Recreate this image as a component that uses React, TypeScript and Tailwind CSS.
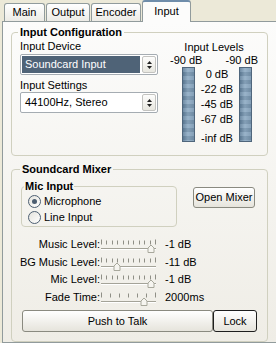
import React from 'react';

/** XP-style trackbar: ticks on top, thin groove, small pointed thumb */
function Trackbar({ ticks, thumb }: { ticks: number; thumb: number }) {
  const xs = Array.from({ length: ticks }, (_, i) => 1 + Math.round((i * 54) / (ticks - 1)));
  return (
    <svg width="57" height="17.5" viewBox="0 0 57 17.5" className="shrink-0">
      {xs.map((x, i) => (
        <line
          key={i}
          x1={x + 0.5}
          x2={x + 0.5}
          y1={i === 0 || i === ticks - 1 ? 3.5 : 4.5}
          y2={8.5}
          stroke="#8f8f86"
        />
      ))}
      <line x1="1" x2="56" y1="12.5" y2="12.5" stroke="#a4a398" />
      <line x1="1" x2="56" y1="13.5" y2="13.5" stroke="#ffffff" />
      <path
        d={`M${thumb - 3} 12 L${thumb} 9 L${thumb + 3} 12 V16.5 H${thumb - 3} Z`}
        fill="#f6f5f0"
        stroke="#a8a89c"
      />
    </svg>
  );
}

function Select({ value, selected = false }: { value: string; selected?: boolean }) {
  return (
    <div className="flex h-[21px] w-[138px] items-stretch rounded-[2px] border border-[#a5acb2] bg-white p-[1px]">
      <div
        className={`flex flex-1 items-center pl-[3px] ${
          selected ? 'bg-[#4f6377] text-white' : 'text-black'
        }`}
      >
        {value}
      </div>
      <div className="ml-[2px] flex w-[14px] flex-col items-center justify-center gap-[2px] rounded-[2px] border border-[#c3c3c0] bg-linear-to-b from-[#fdfdfc] to-[#e8e7e0]">
        <svg width="5" height="3" viewBox="0 0 5 3">
          <path d="M2.5 0 L5 3 H0 Z" fill="#222" />
        </svg>
        <svg width="5" height="3" viewBox="0 0 5 3">
          <path d="M0 0 H5 L2.5 3 Z" fill="#222" />
        </svg>
      </div>
    </div>
  );
}

function Meter() {
  return (
    <div className="h-[75px] w-[13px] border border-[#4f667c] bg-[image:repeating-linear-gradient(to_bottom,rgba(255,255,255,0.10)_0px,rgba(255,255,255,0.10)_4px,rgba(0,0,0,0.07)_4px,rgba(0,0,0,0.07)_8px),linear-gradient(to_right,#61809b,#8eabc4_45%,#7795af)]" />
  );
}

function Radio({ checked, label }: { checked?: boolean; label: string }) {
  return (
    <div className="flex h-[16px] items-center">
      <div className="ml-[4px] flex h-[13px] w-[13px] items-center justify-center rounded-full border border-[#4d5f72] bg-linear-to-br from-[#e4e3dd] to-white">
        {checked && <div className="h-[5px] w-[5px] rounded-full bg-[#4c5d70]" />}
      </div>
      <span className="ml-[3px]">{label}</span>
    </div>
  );
}

function LevelRow({ label, value, ticks, thumb }: { label: string; value: string; ticks: number; thumb: number }) {
  return (
    <div className="flex h-[17.5px] items-center">
      <div className="flex w-[79px] shrink-0 justify-end whitespace-nowrap">
        <span>{label}</span>
      </div>
      <Trackbar ticks={ticks} thumb={thumb} />
      <span className="ml-[8px]">{value}</span>
    </div>
  );
}

function Tab({ label, width }: { label: string; width: string }) {
  return (
    <div
      className={`flex h-[18px] items-start justify-center rounded-t-[3px] border border-b-0 border-[#919b9c] bg-linear-to-b from-white to-[#ecebe6] pt-[2px] ${width}`}
    >
      {label}
    </div>
  );
}

export default function App() {
  return (
    <div className="h-[343px] w-[276px] overflow-hidden bg-[#ece9d8] font-['Liberation_Sans',Arial,sans-serif] text-[11px] leading-[13px] text-black">
      {/* Tabs */}
      <div className="flex h-[21px] items-end gap-[1px] pl-[4px]">
        <Tab label="Main" width="w-[41px]" />
        <Tab label="Output" width="w-[44px]" />
        <Tab label="Encoder" width="w-[50px]" />
        <div className="relative z-10 -mb-[1px] flex h-[22px] w-[49px] items-start justify-center rounded-t-[3px] border border-b-0 border-[#919b9c] border-t-2 border-t-[#6f8daa] bg-[#fcfcfb] pt-[3px]">
          Input
        </div>
      </div>

      {/* Tab page */}
      <div className="ml-[2px] h-[322px] border border-r-0 border-[#919b9c] bg-linear-to-b from-[#fcfcfb] to-[#efede6] pl-[8px] pt-[5px]">
        {/* Input Configuration */}
        <fieldset className="w-[257px] rounded-[4px] border border-[#d0d0bf] pb-[8px] pl-[8px] pr-[9px] pt-[2px]">
          <legend className="-ml-[2px] px-[2px] font-bold leading-[11px]">Input Configuration</legend>
          <div className="flex">
            <div className="flex w-[138px] flex-col">
              <div>Input Device</div>
              <div className="mt-[1px]">
                <Select value="Soundcard Input" selected />
              </div>
              <div className="mt-[4px]">Input Settings</div>
              <Select value="44100Hz, Stereo" />
            </div>
            <div className="ml-auto flex w-[88px] flex-col">
              <div className="mt-[1px] text-center">Input Levels</div>
              <div className="flex justify-between">
                <span>-90 dB</span>
                <span>-90 dB</span>
              </div>
              <div className="flex">
                <div className="ml-[12px]">
                  <Meter />
                </div>
                <div className="flex flex-1 flex-col items-center pt-[1px] [&>div]:h-[15px]">
                  <div>0 dB</div>
                  <div>-22 dB</div>
                  <div>-45 dB</div>
                  <div>-67 dB</div>
                  <div className="mt-[4px]">-inf dB</div>
                </div>
                <div className="mr-[6px]">
                  <Meter />
                </div>
              </div>
            </div>
          </div>
        </fieldset>

        {/* Soundcard Mixer */}
        <fieldset className="mt-[8px] w-[257px] rounded-[4px] border border-[#d0d0bf] pb-[9px] pl-[9px] pr-[9px] pt-0">
          <legend className="-ml-[1px] px-[2px] font-bold leading-[11px]">Soundcard Mixer</legend>
          <div className="flex items-start">
            <fieldset className="mt-[6px] w-[156px] rounded-[4px] border border-[#d0d0bf] pb-[1px] pl-[2px] pt-[1px]">
              <legend className="px-[1px] font-bold leading-[11px]">Mic Input</legend>
              <Radio checked label="Microphone" />
              <Radio label="Line Input" />
            </fieldset>
            <button
              type="button"
              className="ml-[16px] mt-[12px] flex h-[21px] w-[62px] items-center justify-center rounded-[3px] border border-[#8a8a80] bg-linear-to-b from-white to-[#e6e4dc]"
            >
              Open Mixer
            </button>
          </div>

          <div className="mt-[9px] flex flex-col">
            <LevelRow label="Music Level:" value="-1 dB" ticks={11} thumb={51} />
            <LevelRow label="BG Music Level:" value="-11 dB" ticks={11} thumb={17} />
            <LevelRow label="Mic Level:" value="-1 dB" ticks={11} thumb={51} />
            <LevelRow label="Fade Time:" value="2000ms" ticks={7} thumb={44} />
          </div>

          <div className="mt-[4px] flex">
            <button
              type="button"
              className="ml-[1px] flex h-[22px] w-[191px] items-center justify-center rounded-[3px] border border-[#8a8a80] bg-linear-to-b from-white to-[#e6e4dc]"
            >
              Push to Talk
            </button>
            <button
              type="button"
              className="flex h-[22px] w-[44px] items-center justify-center rounded-[3px] border border-[#1e1e1e] bg-linear-to-b from-white to-[#e6e4dc]"
            >
              Lock
            </button>
          </div>
        </fieldset>
      </div>
    </div>
  );
}
